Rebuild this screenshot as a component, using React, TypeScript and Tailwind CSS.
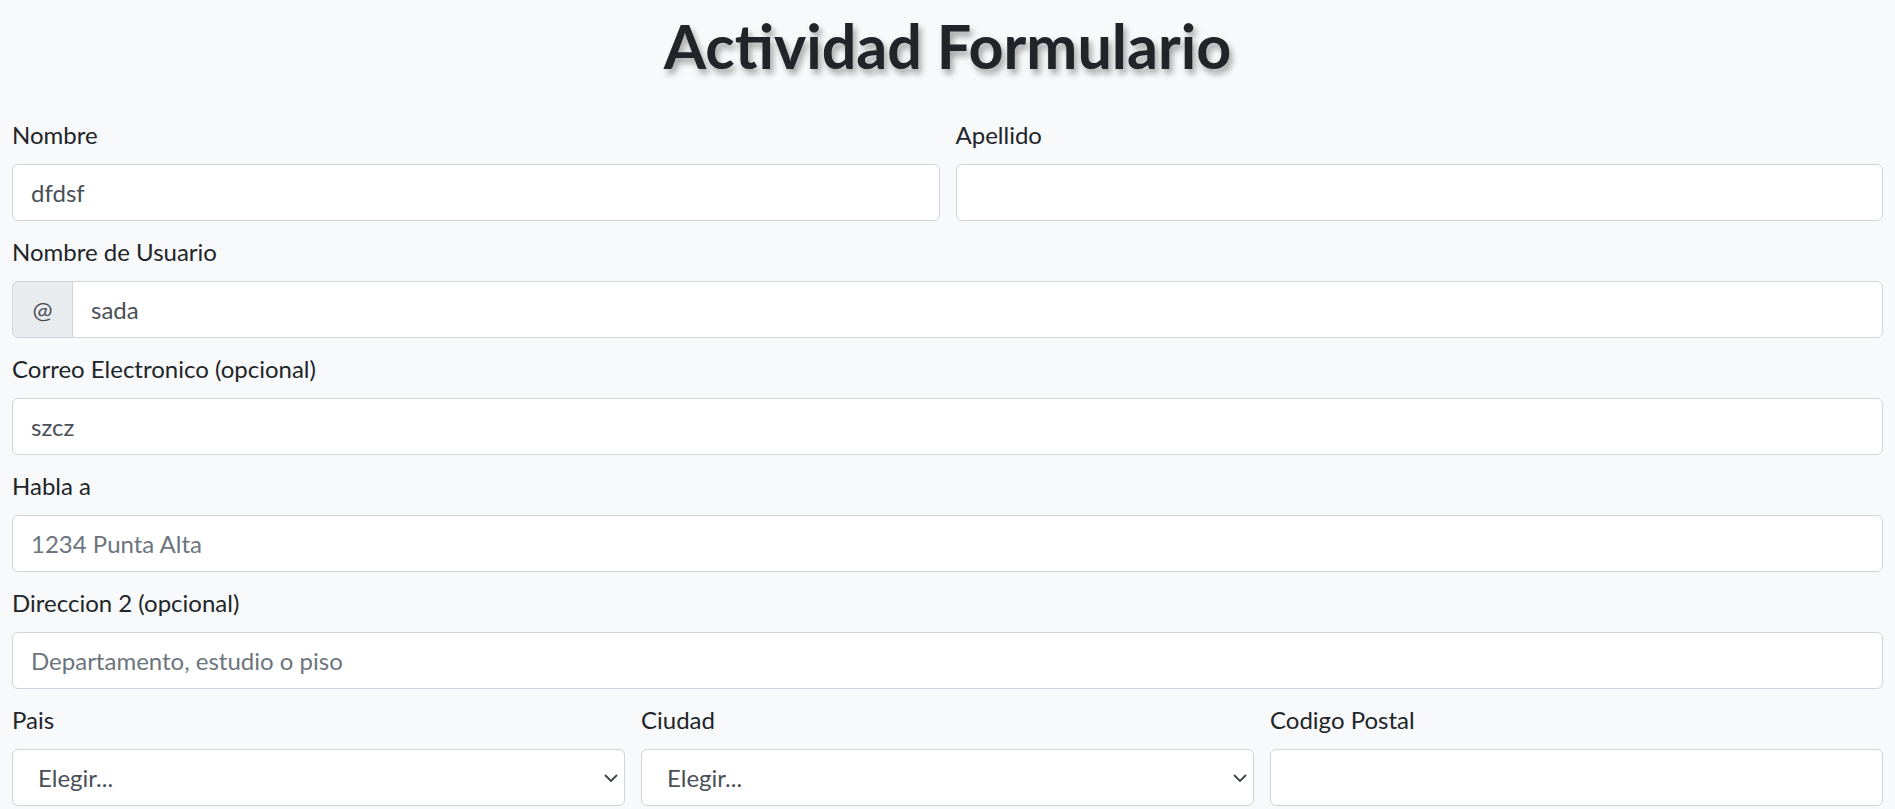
import { useState } from "react";

function Campo({ label, children }: { label: string; children: React.ReactNode }) {
  return (
    <div className="flex flex-col">
      <label className="mb-[11px] block text-[24px] leading-[36px]">{label}</label>
      {children}
    </div>
  );
}

const inputClass =
  "h-[57px] w-full rounded-md border border-[#ced4da] bg-white px-[18px] text-[24px] leading-[36px] text-[#495057] placeholder:text-[#6c757d] outline-none";

function Selector({ opciones }: { opciones: string[] }) {
  return (
    <div className="relative">
      <select className={inputClass + " appearance-none pl-[25px]"} defaultValue="">
        <option value="">Elegir...</option>
        {opciones.map((o) => (
          <option key={o}>{o}</option>
        ))}
      </select>
      {/* flecha del select */}
      <svg
        className="pointer-events-none absolute right-[7px] top-1/2 -translate-y-1/2"
        width="14"
        height="9"
        viewBox="0 0 14 9"
        fill="none"
        stroke="#3d4247"
        strokeWidth="1.8"
      >
        <polyline points="1,1.5 7,7.5 13,1.5" />
      </svg>
    </div>
  );
}

function App() {
  const [nombre, setNombre] = useState("dfdsf");
  const [usuario, setUsuario] = useState("sada");
  const [correo, setCorreo] = useState("szcz");

  return (
    <div className="min-h-screen bg-[#f8f9fa] font-['Lato','Open_Sans',sans-serif] text-[#212529]">
      <div className="px-3 pt-[10px]">
        <h1 className="mb-[35px] text-center text-[61px] font-bold leading-[72px] [text-shadow:3px_5px_6px_rgba(0,0,0,0.35)]">
          Actividad Formulario
        </h1>

        <form className="flex flex-col gap-[13px]">
          {/* nombre y apellido */}
          <div className="grid grid-cols-2 gap-x-4">
            <Campo label="Nombre">
              <input className={inputClass} value={nombre} onChange={(e) => setNombre(e.target.value)} />
            </Campo>
            <Campo label="Apellido">
              <input className={inputClass} />
            </Campo>
          </div>

          <Campo label="Nombre de Usuario">
            <div className="flex h-[57px] w-full">
              <span className="flex w-[61px] shrink-0 items-center justify-center rounded-l-md border border-[#ced4da] bg-[#e9ecef] text-[24px] text-[#495057]">
                @
              </span>
              <input
                className={inputClass + " -ml-px min-w-0 rounded-l-none"}
                value={usuario}
                onChange={(e) => setUsuario(e.target.value)}
              />
            </div>
          </Campo>

          <Campo label="Correo Electronico (opcional)">
            <input className={inputClass} value={correo} onChange={(e) => setCorreo(e.target.value)} />
          </Campo>

          <Campo label="Habla a">
            <input className={inputClass} placeholder="1234 Punta Alta" />
          </Campo>

          <Campo label="Direccion 2 (opcional)">
            <input className={inputClass} placeholder="Departamento, estudio o piso" />
          </Campo>

          {/* pais, ciudad, codigo postal */}
          <div className="grid grid-cols-3 gap-x-4">
            <Campo label="Pais">
              <Selector opciones={["Argentina"]} />
            </Campo>
            <Campo label="Ciudad">
              <Selector opciones={["Bahia Blanca", "Punta Alta"]} />
            </Campo>
            <Campo label="Codigo Postal">
              <input className={inputClass} />
            </Campo>
          </div>
        </form>
      </div>
    </div>
  );
}

export default App;
